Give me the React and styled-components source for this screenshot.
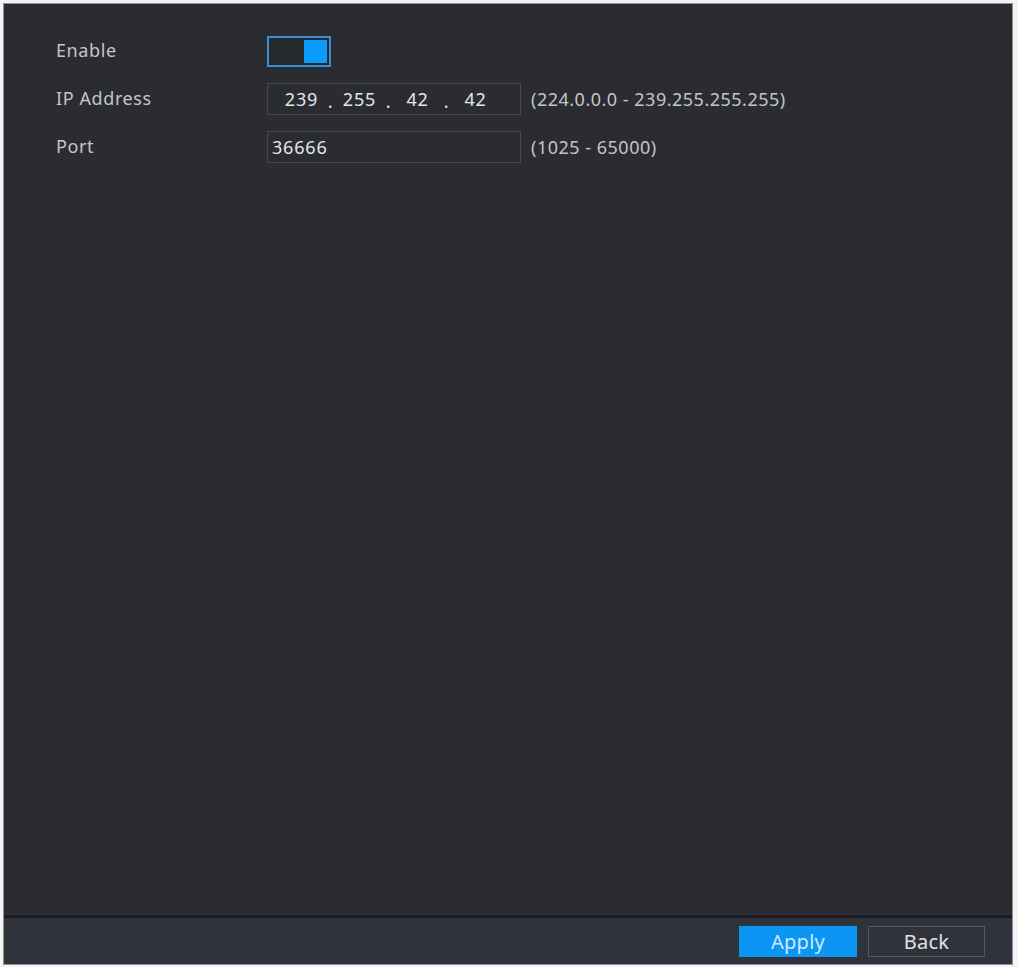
import React from "react";
import styled, { createGlobalStyle } from "styled-components";

const Global = createGlobalStyle`
  html, body { margin: 0; padding: 0; background: #f4f4f4; }
  body { font-family: "Noto Sans", "Open Sans", sans-serif; }
`;

const Frame = styled.div`
  width: 1018px;
  height: 967px;
  padding: 3px 5px 2px 3px;
  box-sizing: border-box;
`;

const Panel = styled.div`
  height: 100%;
  border: 1px solid #8d8f93;
  background: #2a2c32;
  display: flex;
  flex-direction: column;
  box-sizing: border-box;
`;

const Content = styled.div`
  flex: 1;
  padding: 31px 0 0 52px;
  display: flex;
  flex-direction: column;
  gap: 16px;
`;

const Row = styled.div`
  display: flex;
  align-items: center;
  height: 32px;
`;

const Label = styled.div`
  width: 211px;
  color: #c4c5c8;
  font-size: 18px;
  letter-spacing: 0.6px;
  margin-top: -3px;
`;

const Toggle = styled.div`
  width: 64px;
  height: 31px;
  box-sizing: border-box;
  border: 2px solid #3b8fd6;
  background: #25282d;
  display: flex;
  justify-content: flex-end;
  padding: 2px;
`;

const Knob = styled.div`
  width: 23px;
  height: 100%;
  background: #0c9cff;
`;

const Input = styled.div`
  width: 254px;
  height: 32px;
  box-sizing: border-box;
  border: 1px solid #44474e;
  background: #2a2c32;
  display: flex;
  align-items: center;
  color: #e6e6e6;
  font-size: 18px;
  letter-spacing: 0.8px;
  padding-left: ${(p) => p.$pl || 4}px;
`;

const Octet = styled.span`
  width: 41px;
  text-align: center;
`;

const Dot = styled.span`
  width: 17px;
  text-align: center;
  padding-top: 4px;
`;

const Hint = styled.div`
  margin-left: 10px;
  color: #c4c5c8;
  font-size: 18px;
  letter-spacing: 0.5px;
`;

const Footer = styled.div`
  height: 46px;
  border-top: 3px solid #1b1d22;
  background: #30333b;
  display: flex;
  justify-content: flex-end;
  align-items: center;
  gap: 11px;
  padding-right: 27px;
`;

const Button = styled.div`
  width: ${(p) => p.$w}px;
  height: 31px;
  box-sizing: border-box;
  display: flex;
  align-items: center;
  justify-content: center;
  font-size: 20px;
  letter-spacing: 0.3px;
  background: ${(p) => (p.$primary ? "#0b96f4" : "transparent")};
  border: 1px solid ${(p) => (p.$primary ? "#0b96f4" : "#55585f")};
  color: ${(p) => (p.$primary ? "#cfe8ff" : "#e2e2e2")};
`;

export default function App() {
  const octets = ["239", "255", "42", "42"];
  return (
    <>
      <Global />
      <Frame>
        <Panel>
          <Content>
            <Row>
              <Label>Enable</Label>
              <Toggle>
                <Knob />
              </Toggle>
            </Row>
            <Row>
              <Label>IP Address</Label>
              <Input $pl={13}>
                {octets.map((o, i) => (
                  <React.Fragment key={i}>
                    {i > 0 && <Dot>.</Dot>}
                    <Octet>{o}</Octet>
                  </React.Fragment>
                ))}
              </Input>
              <Hint>(224.0.0.0 - 239.255.255.255)</Hint>
            </Row>
            <Row>
              <Label>Port</Label>
              <Input>36666</Input>
              <Hint>(1025 - 65000)</Hint>
            </Row>
          </Content>
          <Footer>
            <Button $primary $w={118}>Apply</Button>
            <Button $w={117}>Back</Button>
          </Footer>
        </Panel>
      </Frame>
    </>
  );
}
